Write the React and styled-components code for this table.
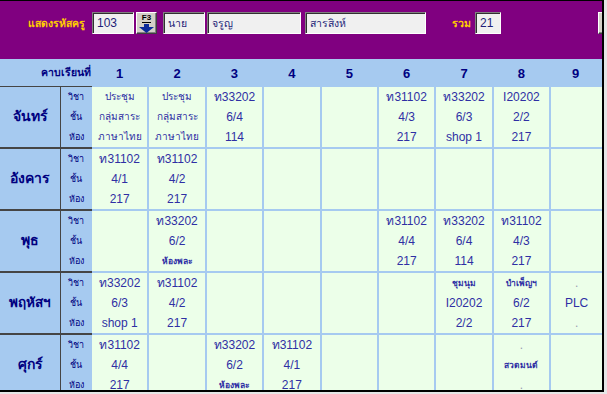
import React from 'react';
import styled, {createGlobalStyle} from "styled-components";

// cell colours follow the old VB palette
const SKY = '#a6caf0';
const MINT = '#ecffe9';
const NAVY = '#000080';
const INK = '#2f2fa4';
const EDGE = '#454545';

const GlobalStyle = createGlobalStyle`
  body {
    margin: 0;
    background: #e6e6e6;
    font-family: "Liberation Sans", "DejaVu Sans", sans-serif;
  }
`;

const Frame = styled.div`
  width: 604px;
  height: 392px;
  box-sizing: border-box;
  border-top: 1px solid #000;
  border-right: 2px solid #000;
  border-bottom: 2px solid #000;
  background: ${SKY};
  overflow: hidden;
`;

const TopBar = styled.div`
  height: 58px;
  background: #800080;
  display: flex;
  align-items: flex-start;
  padding: 11px 0 0 28px;
  box-sizing: border-box;
  white-space: nowrap;
`;

const Caption = styled.span`
  flex: none;
  width: ${p => p.$w}px;
  color: #ffcc00;
  font-size: 10.5px;
  font-weight: bold;
  line-height: 22px;
  margin-left: ${p => p.$ml || 0}px;
`;

const Field = styled.div`
  flex: none;
  width: ${p => p.$w}px;
  height: 22px;
  margin-left: ${p => p.$ml || 0}px;
  box-sizing: border-box;
  background: #f0f0f0;
  border-top: 1px solid #808080;
  border-left: 1px solid #808080;
  border-right: 1px solid #fff;
  border-bottom: 1px solid #fff;
  box-shadow: inset 1px 1px 0 #303030;
  color: #1e1e78;
  font-size: ${p => p.$thai ? 10.5 : 12}px;
  line-height: 20px;
  padding-left: 4px;
`;

const KeyButton = styled.div`
  flex: none;
  width: 21px;
  height: 22px;
  margin-left: ${p => p.$ml || 0}px;
  box-sizing: border-box;
  background: #d4d0c8;
  border-top: 1px solid #fff;
  border-left: 1px solid #fff;
  border-right: 1px solid #404040;
  border-bottom: 1px solid #404040;
  box-shadow: inset -1px -1px 0 #808080;
  display: flex;
  flex-direction: column;
  align-items: center;
  padding-top: 1px;
`;

const KeyLabel = styled.span`
  font-size: 8px;
  font-weight: bold;
  line-height: 8px;
  color: #000;
  border-bottom: 1px solid #000;
  margin-bottom: 1px;
`;

const Grid = styled.div`
  display: grid;
  grid-template-columns: 61px 31px repeat(8, 57.4px) 1fr;
`;

const HeadRow = styled(Grid)`
  height: 28px;
  align-items: center;
`;

const HeadTitle = styled.div`
  grid-column: 1 / 3;
  height: 28px;
  box-sizing: border-box;
  border-bottom: 1px solid ${EDGE};
  color: ${NAVY};
  font-weight: bold;
  font-size: 10.5px;
  text-align: right;
  line-height: 26px;
  padding-right: 1px;
`;

const HeadNum = styled.div`
  color: ${NAVY};
  font-weight: bold;
  font-size: 13px;
  text-align: center;
  padding-right: 2px;
`;

const Row = styled(Grid)`
  height: 62px;
`;

const Day = styled.div`
  box-sizing: border-box;
  border-right: 1px solid ${EDGE};
  border-bottom: 2px solid ${EDGE};
  display: flex;
  align-items: center;
  justify-content: center;
  color: ${NAVY};
  font-weight: bold;
  font-size: ${p => p.$size || 14}px;
  padding-bottom: 2px;
`;

const Labels = styled.div`
  box-sizing: border-box;
  border-bottom: 2px solid ${EDGE};
  display: flex;
  flex-direction: column;
  padding-right: 1px;
`;

const Line = styled.div`
  height: 20px;
  line-height: 20px;
  text-align: center;
  white-space: nowrap;
  color: ${p => p.$dot ? '#9a9ab0' : p.$label ? NAVY : INK};
  font-size: ${p => p.$label ? 9 : p.$small ? 8.5 : p.$thai ? 10 : 12}px;
  font-weight: ${p => p.$small ? 'bold' : 'normal'};
`;

const Slot = styled.div`
  box-sizing: border-box;
  background: ${MINT};
  border-bottom: 2px solid ${SKY};
  border-right: ${p => p.$last ? 'none' : `2px solid ${SKY}`};
  display: flex;
  flex-direction: column;
`;

const Arrow = () => (
  <svg width="15" height="9" viewBox="0 0 15 9">
    <rect x="5" y="0" width="5" height="3" fill="#0b2a9a"/>
    <polygon points="0,3 15,3 7.5,9" fill="#0b2a9a"/>
  </svg>
);

const E = null;
const meeting = ['ประชุม', 'กลุ่มสาระ', 'ภาษาไทย'];

const days = [
  {name: 'จันทร์', slots: [meeting, meeting, ['ท33202', '6/4', '114'], E, E,
      ['ท31102', '4/3', '217'], ['ท33202', '6/3', 'shop 1'], ['I20202', '2/2', '217'], E]},
  {name: 'อังคาร', slots: [['ท31102', '4/1', '217'], ['ท31102', '4/2', '217'], E, E, E, E, E, E, E]},
  {name: 'พุธ', slots: [E, ['ท33202', '6/2', '*ห้องพละ'], E, E, E,
      ['ท31102', '4/4', '217'], ['ท33202', '6/4', '114'], ['ท31102', '4/3', '217'], E]},
  {name: 'พฤหัสฯ', size: 13.5, slots: [['ท33202', '6/3', 'shop 1'], ['ท31102', '4/2', '217'], E, E, E, E,
      ['*ชุมนุม', 'I20202', '2/2'], ['*บำเพ็ญฯ', '6/2', '217'], ['.', 'PLC', '.']]},
  {name: 'ศุกร์', slots: [['ท31102', '4/4', '217'], E, ['ท33202', '6/2', '*ห้องพละ'], ['ท31102', '4/1', '217'],
      E, E, E, ['.', '*สวดมนต์', '.'], E]},
];

const thaiOnly = /^[\u0E00-\u0E7F]+$/;

const SlotText = ({text}) => {
  if (text === '.') return <Line $dot>.</Line>;
  if (text.startsWith('*')) return <Line $small>{text.slice(1)}</Line>;
  return <Line $thai={thaiOnly.test(text)}>{text}</Line>;
};

const App = () => {
  return (<>
    <GlobalStyle/>
    <Frame>
      <TopBar>
        <Caption $w={57}>แสดงรหัสครู</Caption>
        <Field $w={42} $ml={7}>103</Field>
        <KeyButton $ml={2}>
          <KeyLabel>F3</KeyLabel>
          <Arrow/>
        </KeyButton>
        <Field $w={42} $ml={6} $thai>นาย</Field>
        <Field $w={94} $ml={2} $thai>จรูญ</Field>
        <Field $w={121} $ml={4} $thai>สารสิงห์</Field>
        <Caption $w={18} $ml={26}>รวม</Caption>
        <Field $w={26} $ml={5}>21</Field>
        <KeyButton $ml={97}/>
      </TopBar>

      <HeadRow>
        <HeadTitle>คาบเรียนที่</HeadTitle>
        {[1, 2, 3, 4, 5, 6, 7, 8, 9].map(n => <HeadNum key={n}>{n}</HeadNum>)}
      </HeadRow>

      {days.map(day => (
        <Row key={day.name}>
          <Day $size={day.size}>{day.name}</Day>
          <Labels>
            <Line $label>วิชา</Line>
            <Line $label>ชั้น</Line>
            <Line $label>ห้อง</Line>
          </Labels>
          {day.slots.map((slot, i) => (
            <Slot key={i} $last={i === 8}>
              {slot && slot.map((t, j) => <SlotText key={j} text={t}/>)}
            </Slot>
          ))}
        </Row>
      ))}
    </Frame>
  </>)
};

export default App;
